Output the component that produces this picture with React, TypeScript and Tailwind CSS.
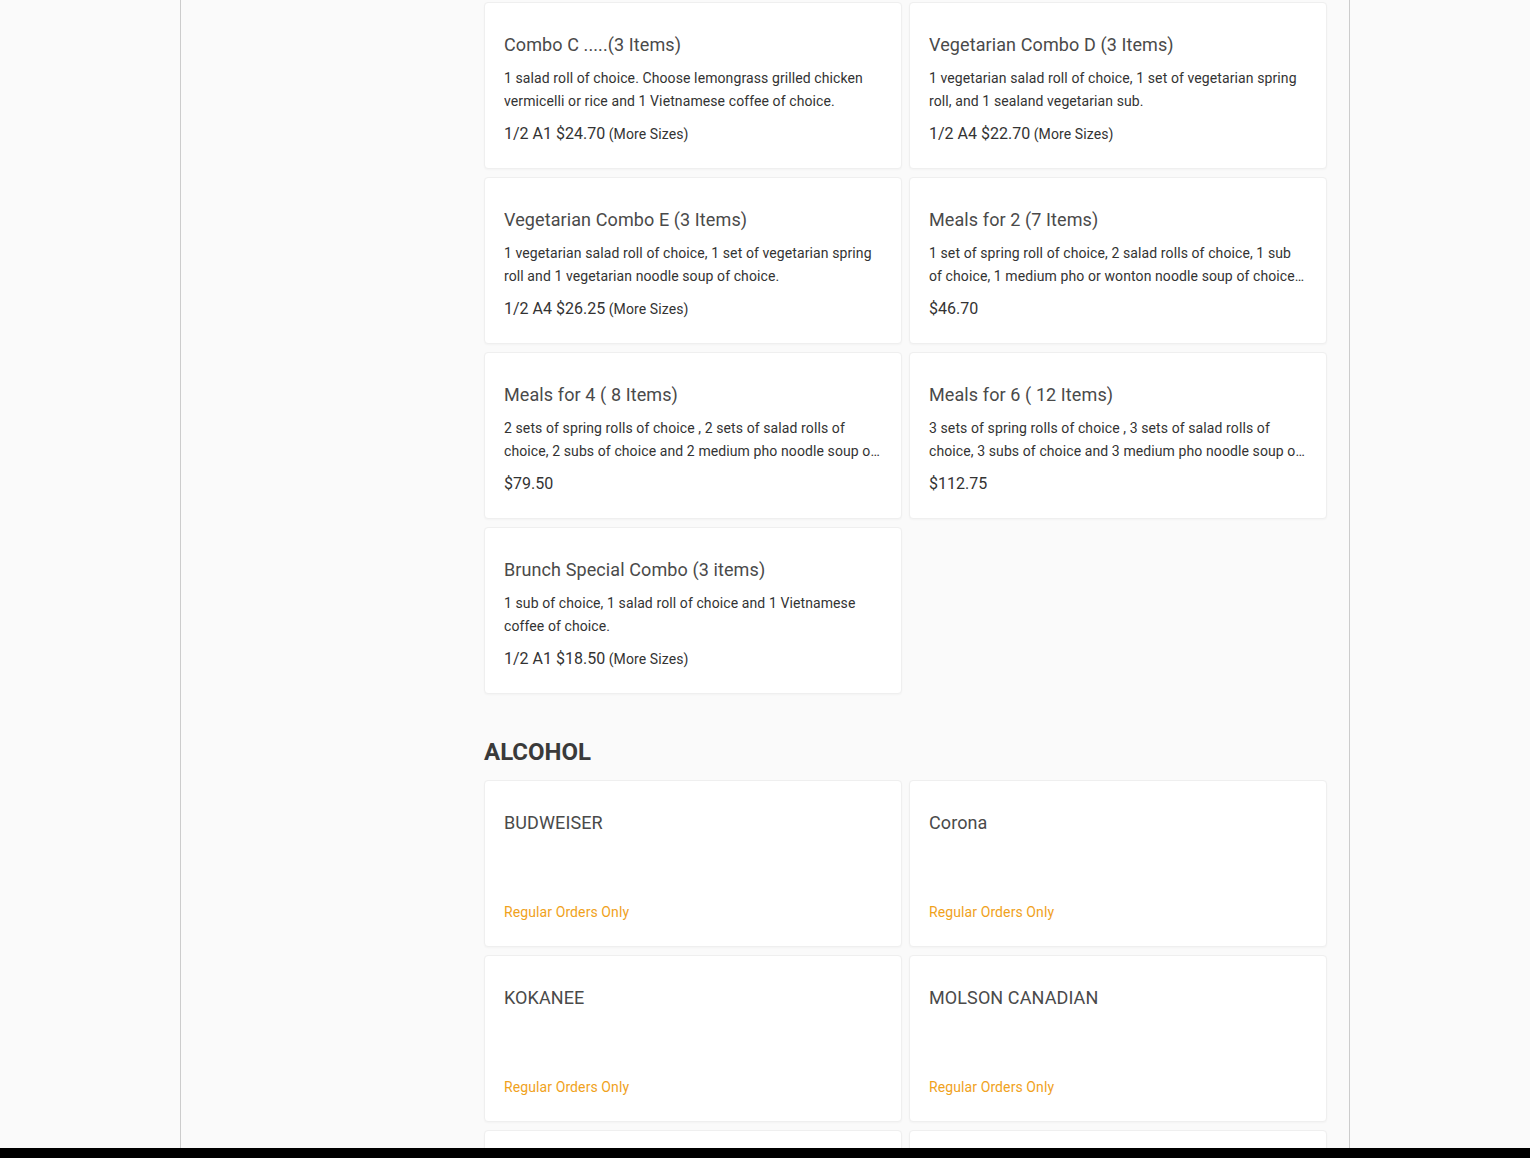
import React from 'react';

type Item = {
    name: string;
    description?: string;
    price?: string;
    moreSizes?: boolean;
    regularOnly?: boolean;
};

const combos: Item[] = [
    {
        name: 'Combo C .....(3 Items)',
        description: '1 salad roll of choice. Choose lemongrass grilled chicken vermicelli or rice and 1 Vietnamese coffee of choice.',
        price: '1/2 A1 $24.70',
        moreSizes: true,
    },
    {
        name: 'Vegetarian Combo D (3 Items)',
        description: '1 vegetarian salad roll of choice, 1 set of vegetarian spring roll, and 1 sealand vegetarian sub.',
        price: '1/2 A4 $22.70',
        moreSizes: true,
    },
    {
        name: 'Vegetarian Combo E (3 Items)',
        description: '1 vegetarian salad roll of choice, 1 set of vegetarian spring roll and 1 vegetarian noodle soup of choice.',
        price: '1/2 A4 $26.25',
        moreSizes: true,
    },
    {
        name: 'Meals for 2 (7 Items)',
        description: '1 set of spring roll of choice, 2 salad rolls of choice, 1 sub of choice, 1 medium pho or wonton noodle soup of choice and 2 Vietnamese coffee of choice.',
        price: '$46.70',
    },
    {
        name: 'Meals for 4 ( 8 Items)',
        description: '2 sets of spring rolls of choice , 2 sets of salad rolls of choice, 2 subs of choice and 2 medium pho noodle soup of choice.',
        price: '$79.50',
    },
    {
        name: 'Meals for 6 ( 12 Items)',
        description: '3 sets of spring rolls of choice , 3 sets of salad rolls of choice, 3 subs of choice and 3 medium pho noodle soup of choice.',
        price: '$112.75',
    },
    {
        name: 'Brunch Special Combo (3 items)',
        description: '1 sub of choice, 1 salad roll of choice and 1 Vietnamese coffee of choice.',
        price: '1/2 A1 $18.50',
        moreSizes: true,
    },
];

const alcohol: Item[] = [
    { name: 'BUDWEISER', regularOnly: true },
    { name: 'Corona', regularOnly: true },
    { name: 'KOKANEE', regularOnly: true },
    { name: 'MOLSON CANADIAN', regularOnly: true },
    { name: 'STELLA ARTOIS', regularOnly: true },
    { name: 'HEINEKEN', regularOnly: true },
];

const MenuCard: React.FC<{ item: Item }> = ({ item }) => (
    <div className="bg-white border border-[#efefef] rounded-[4px] shadow-[0_1px_2px_rgba(0,0,0,0.03)] pt-[28px] pl-[19px] pr-5 pb-[22px]">
        <h3 className="text-[18px] leading-[27px] tracking-[0.1px] text-[#4a4a4a] truncate">{item.name}</h3>
        <p className="mt-[9px] h-[46px] text-[14px] leading-[23px] tracking-[0.1px] text-[#333] line-clamp-2">
            {item.description}
        </p>
        <div className="mt-[9px] h-6 leading-6">
            {item.price && (
                <span className="text-[16px] text-[#333]">
                    {item.price}
                    {item.moreSizes && <span className="text-[14px] tracking-[0.1px]"> (More Sizes)</span>}
                </span>
            )}
            {item.regularOnly && (
                <span className="text-[14px] tracking-[0.1px] text-[#f0a21c]">Regular Orders Only</span>
            )}
        </div>
    </div>
);

export default function App() {
    return (
        <div className="h-[1158px] overflow-hidden bg-[#fafafa] font-['Roboto',sans-serif]">
            <div className="h-[1148px] overflow-hidden">
                <div className="mx-auto w-[1170px] h-full border-x border-[#cccccc] flex">
                    <aside className="w-[303px] shrink-0" />
                    <main className="w-[843px] pt-[2px]">
                        <div className="grid grid-cols-2 gap-x-[7px] gap-y-2">
                            {combos.map((c) => (
                                <MenuCard key={c.name} item={c} />
                            ))}
                        </div>

                        <h2 className="mt-[42px] mb-[12px] text-[24px] leading-8 font-bold text-[#3a3a3a]">ALCOHOL</h2>
                        <div className="grid grid-cols-2 gap-x-[7px] gap-y-2">
                            {alcohol.map((a) => (
                                <MenuCard key={a.name} item={a} />
                            ))}
                        </div>
                    </main>
                </div>
            </div>
            <div className="h-[10px] bg-black" />
        </div>
    );
}
